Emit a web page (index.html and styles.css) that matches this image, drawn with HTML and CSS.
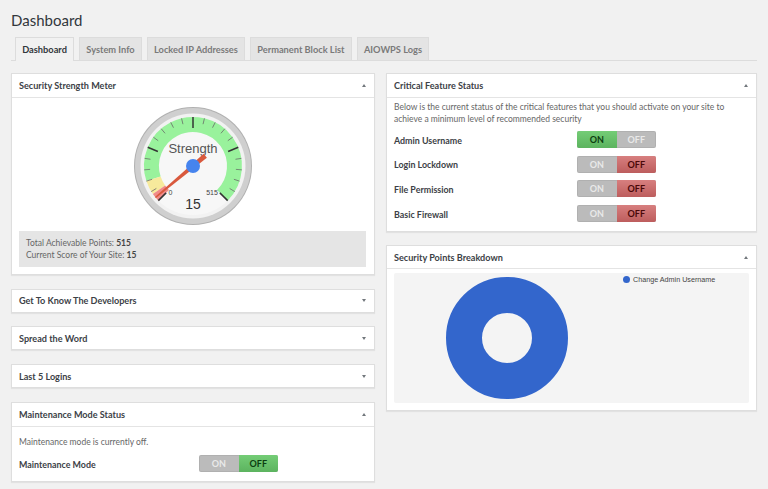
FILE: index.html
```html
<!DOCTYPE html>
<html lang="en">
<head>
    <meta charset="UTF-8">
    <meta name="viewport" content="width=device-width, initial-scale=1.0">
    <title>Dashboard</title>
    <link rel="stylesheet" href="styles.css">
</head>
<body>
    <h1>Dashboard</h1>

    <div class="tabs">
        <a class="tab active">Dashboard</a>
        <a class="tab">System Info</a>
        <a class="tab">Locked IP Addresses</a>
        <a class="tab">Permanent Block List</a>
        <a class="tab">AIOWPS Logs</a>
    </div>

    <div class="columns">
        <div class="column">
            <div class="box">
                <div class="box-head">Security Strength Meter <span class="arrow up"></span></div>
                <div class="box-body meter-body">
                    <svg class="gauge" width="120" height="120" viewBox="0 0 120 120">
                        <circle cx="60" cy="60" r="59" fill="#b0b0b0"/>
                        <circle cx="60" cy="60" r="58" fill="#cfcfcf"/>
                        <circle cx="60" cy="60" r="52.5" fill="#f2f2f2"/>
                        <circle cx="60" cy="60" r="49" fill="#f7f7f7"/>
                        <g fill="none" stroke-width="15">
                            <path d="M20.5 72.8A41.5 41.5 0 1 1 89.34 89.34" stroke="#99f29c"/>
                            <path d="M26 83.8A41.5 41.5 0 0 1 20.5 72.8" stroke="#f7ea9c"/>
                            <path d="M30.66 89.34A41.5 41.5 0 0 1 26 83.8" stroke="#f08a8a"/>
                        </g>
                        <g stroke="#333" stroke-width="1.5">
                            <line x1="60" y1="11" x2="60" y2="22" transform="rotate(-135 60 60)"/>
                            <line x1="60" y1="11" x2="60" y2="22" transform="rotate(-67.5 60 60)"/>
                            <line x1="60" y1="11" x2="60" y2="22" transform="rotate(0 60 60)"/>
                            <line x1="60" y1="11" x2="60" y2="22" transform="rotate(67.5 60 60)"/>
                            <line x1="60" y1="11" x2="60" y2="22" transform="rotate(135 60 60)"/>
                        </g>
                        <g stroke="#666" stroke-width="0.7">
                            <line x1="60" y1="11" x2="60" y2="17" transform="rotate(-121.5 60 60)"/>
                            <line x1="60" y1="11" x2="60" y2="17" transform="rotate(-108 60 60)"/>
                            <line x1="60" y1="11" x2="60" y2="17" transform="rotate(-94.5 60 60)"/>
                            <line x1="60" y1="11" x2="60" y2="17" transform="rotate(-81 60 60)"/>
                            <line x1="60" y1="11" x2="60" y2="17" transform="rotate(-54 60 60)"/>
                            <line x1="60" y1="11" x2="60" y2="17" transform="rotate(-40.5 60 60)"/>
                            <line x1="60" y1="11" x2="60" y2="17" transform="rotate(-27 60 60)"/>
                            <line x1="60" y1="11" x2="60" y2="17" transform="rotate(-13.5 60 60)"/>
                            <line x1="60" y1="11" x2="60" y2="17" transform="rotate(13.5 60 60)"/>
                            <line x1="60" y1="11" x2="60" y2="17" transform="rotate(27 60 60)"/>
                            <line x1="60" y1="11" x2="60" y2="17" transform="rotate(40.5 60 60)"/>
                            <line x1="60" y1="11" x2="60" y2="17" transform="rotate(54 60 60)"/>
                            <line x1="60" y1="11" x2="60" y2="17" transform="rotate(81 60 60)"/>
                            <line x1="60" y1="11" x2="60" y2="17" transform="rotate(94.5 60 60)"/>
                            <line x1="60" y1="11" x2="60" y2="17" transform="rotate(108 60 60)"/>
                            <line x1="60" y1="11" x2="60" y2="17" transform="rotate(121.5 60 60)"/>
                        </g>
                        <text class="gauge-title" x="60" y="47">Strength</text>
                        <text class="gauge-small" x="37.5" y="89">0</text>
                        <text class="gauge-small" x="79" y="89">515</text>
                        <text class="gauge-value" x="60" y="103">15</text>
                        <polygon points="57.5,76 62.5,76 60.8,11 59.2,11" fill="#d9593d" transform="rotate(-130 60 60)"/>
                        <circle cx="60" cy="60" r="7" fill="#4684ee"/>
                    </svg>
                    <div class="score">
                        <div>Total Achievable Points: <strong>515</strong></div>
                        <div>Current Score of Your Site: <strong>15</strong></div>
                    </div>
                </div>
            </div>

            <div class="box">
                <div class="box-head closed">Get To Know The Developers <span class="arrow down"></span></div>
            </div>
            <div class="box">
                <div class="box-head closed">Spread the Word <span class="arrow down"></span></div>
            </div>
            <div class="box">
                <div class="box-head closed">Last 5 Logins <span class="arrow down"></span></div>
            </div>

            <div class="box">
                <div class="box-head">Maintenance Mode Status <span class="arrow up"></span></div>
                <div class="box-body maintenance-body">
                    <p>Maintenance mode is currently off.</p>
                    <div class="feature wide">
                        <span class="feature-name">Maintenance Mode</span>
                        <div class="toggle"><span>ON</span><span class="off-good">OFF</span></div>
                    </div>
                </div>
            </div>
        </div>

        <div class="column right">
            <div class="box">
                <div class="box-head">Critical Feature Status <span class="arrow up"></span></div>
                <div class="box-body critical-body">
                    <p>Below is the current status of the critical features that you should activate on your site to achieve a minimum level of recommended security</p>
                    <div class="feature">
                        <span class="feature-name">Admin Username</span>
                        <div class="toggle"><span class="on">ON</span><span>OFF</span></div>
                    </div>
                    <div class="feature">
                        <span class="feature-name">Login Lockdown</span>
                        <div class="toggle"><span>ON</span><span class="off-bad">OFF</span></div>
                    </div>
                    <div class="feature">
                        <span class="feature-name">File Permission</span>
                        <div class="toggle"><span>ON</span><span class="off-bad">OFF</span></div>
                    </div>
                    <div class="feature">
                        <span class="feature-name">Basic Firewall</span>
                        <div class="toggle"><span>ON</span><span class="off-bad">OFF</span></div>
                    </div>
                </div>
            </div>

            <div class="box">
                <div class="box-head short">Security Points Breakdown <span class="arrow up"></span></div>
                <div class="box-body chart-body">
                    <div class="chart">
                        <svg class="donut" width="122" height="122" viewBox="0 0 122 122">
                            <circle cx="61" cy="61" r="43" fill="none" stroke="#3366cc" stroke-width="36"/>
                        </svg>
                        <div class="legend"><span class="legend-dot"></span>Change Admin Username</div>
                    </div>
                </div>
            </div>
        </div>
    </div>
</body>
</html>
```

FILE: styles.css
```css
body {
    font-family: Lato, "Open Sans", sans-serif;
    font-size: 8.5px;
    margin: 0;
    padding: 0 11px;
    height: 489px;
    box-sizing: border-box;
    overflow: hidden;
    background-color: #f1f1f1;
    color: #555;
}
h1 {
    font-size: 15px;
    font-weight: 400;
    line-height: 20px;
    margin: 0;
    padding-top: 10px;
    color: #32373c;
}
.tabs {
    display: flex;
    gap: 5px;
    height: 23px;
    margin-top: 7px;
    padding-left: 4px;
    border-bottom: 1px solid #dcdcdc;
}
.tab {
    height: 23px;
    padding: 0 6.2px;
    display: flex;
    align-items: center;
    background: #e4e4e4;
    border: 1px solid #dcdcdc;
    border-bottom: none;
    box-sizing: border-box;
    font-size: 9.25px;
    font-weight: 700;
    color: #7a7a7a;
}
.tab.active {
    height: 24px;
    background: #f1f1f1;
    color: #32373c;
}
.columns {
    display: grid;
    grid-template-columns: 364px 371px;
    gap: 11px;
    margin-top: 12px;
    align-items: start;
}
.column {
    display: flex;
    flex-direction: column;
    gap: 13.7px;
}
.column.right {
    gap: 13px;
}
.box {
    background: #fff;
    border: 1px solid #dedede;
    box-shadow: 0 1px 1px rgba(0, 0, 0, 0.06);
}
.box-head {
    height: 23px;
    padding: 0 8px 0 7px;
    display: flex;
    align-items: center;
    justify-content: space-between;
    border-bottom: 1px solid #e4e4e4;
    font-size: 9.1px;
    font-weight: 700;
    color: #3c4146;
}
.box-head.closed {
    height: 22px;
    border-bottom: none;
}
.box-head.short {
    height: 22px;
}
.arrow {
    width: 0;
    height: 0;
    border-left: 2.5px solid transparent;
    border-right: 2.5px solid transparent;
}
.arrow.up {
    border-bottom: 3.5px solid #72777c;
}
.arrow.down {
    border-top: 3.5px solid #72777c;
}
.box-body p {
    margin: 0;
    line-height: 12px;
    color: #666;
}
.meter-body {
    padding: 8px 8px 7px 7px;
}
.gauge {
    display: block;
    margin: 0 auto;
}
.gauge-title {
    font-family: "Liberation Sans", Arial, sans-serif;
    font-size: 13px;
    fill: #555;
    text-anchor: middle;
}
.gauge-small {
    font-family: "Liberation Sans", Arial, sans-serif;
    font-size: 7px;
    fill: #444;
    text-anchor: middle;
}
.gauge-value {
    font-family: "Liberation Sans", Arial, sans-serif;
    font-size: 14px;
    fill: #333;
    text-anchor: middle;
}
.score {
    margin-top: 5px;
    padding: 6px 7px;
    background: #e5e5e5;
    line-height: 12px;
    color: #666;
}
.score strong {
    font-weight: 700;
    color: #444;
}
.maintenance-body {
    padding: 9px 7px 9px;
}
.critical-body {
    padding: 3px 7px 9px;
}
.feature {
    display: grid;
    grid-template-columns: 183px auto;
    align-items: center;
    height: 17px;
    margin-top: 7.7px;
}
.feature.wide {
    grid-template-columns: 180px auto;
    margin-top: 7.5px;
}
.critical-body p + .feature {
    margin-top: 6px;
}
.feature-name {
    padding-top: 1px;
    font-size: 8.9px;
    font-weight: 700;
    color: #3c4146;
}
.toggle {
    display: flex;
    width: 79px;
    height: 17px;
    border-radius: 2px;
    overflow: hidden;
    font-size: 9px;
    font-weight: 700;
    background: #bbb;
    color: #e9e9e9;
    box-shadow: inset 0 0 0 1px rgba(0, 0, 0, 0.06);
}
.toggle span {
    flex: 1;
    display: flex;
    align-items: center;
    justify-content: center;
}
.toggle .on,
.toggle .off-good {
    background: linear-gradient(#74cd76, #5cb35f);
    color: #0c3d10;
}
.toggle .off-bad {
    background: linear-gradient(#d77f7f, #bd5d5d);
    color: #4a0808;
}
.chart-body {
    padding: 4px 7px 7px;
}
.chart {
    position: relative;
    height: 130px;
    border-radius: 2px;
    background: #f4f4f4;
}
.donut {
    position: absolute;
    left: 52px;
    top: 4px;
}
.legend {
    position: absolute;
    left: 229px;
    top: 2px;
    display: flex;
    align-items: center;
    gap: 3px;
    font-family: "Liberation Sans", Arial, sans-serif;
    font-size: 7.2px;
    color: #444;
}
.legend-dot {
    width: 7px;
    height: 7px;
    border-radius: 50%;
    background: #3366cc;
}
```
